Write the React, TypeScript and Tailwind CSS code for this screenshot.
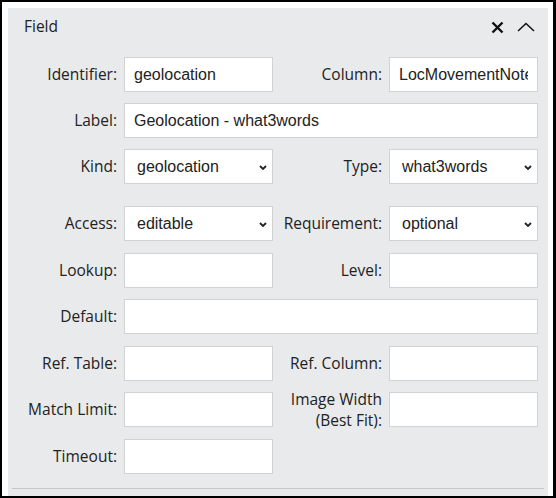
import React from "react";

const labelCls =
  "self-center text-right text-[15.5px] leading-[21px] text-[#222] font-['Open_Sans',sans-serif]";
const inputCls =
  "h-[35px] w-full border border-[#d2d2d2] bg-white px-[9px] text-[16px] text-[#222] font-['Liberation_Sans',Arial,sans-serif] outline-none";

function Label({ children }: { children: React.ReactNode }) {
  return <div className={labelCls}>{children}</div>;
}

function Input({ value = "", wide = false }: { value?: string; wide?: boolean }) {
  return (
    <input
      className={inputCls + (wide ? " col-span-3" : "")}
      defaultValue={value}
      readOnly
    />
  );
}

function Select({ value }: { value: string }) {
  return (
    <div className="relative h-[35px]">
      <select
        className="h-[35px] w-full appearance-none border border-[#d2d2d2] bg-white pl-[12px] pr-[20px] text-[16px] text-[#222] font-['Liberation_Sans',Arial,sans-serif] outline-none"
        defaultValue={value}
      >
        <option value={value}>{value}</option>
      </select>
      <svg
        className="pointer-events-none absolute right-[6px] top-[16px]"
        width="8"
        height="5"
        viewBox="0 0 8 5"
      >
        <polyline
          points="1,1 4,4 7,1"
          fill="none"
          stroke="#222"
          strokeWidth="1.8"
        />
      </svg>
    </div>
  );
}

export default function App() {
  return (
    <div className="box-border h-[498px] w-[556px] overflow-hidden border-b-2 border-l-2 border-r-[3px] border-t-2 border-black bg-white pl-[6px] pr-[5px] pt-[6px]">
      <div className="h-[600px] bg-[#e9eaeb]">
        <div className="flex h-[38px] items-center justify-between pl-[16px] pr-[13px]">
          <span className="text-[15.5px] text-[#222] font-['Open_Sans',sans-serif]">
            Field
          </span>
          <div className="flex items-center gap-[13px]">
            <svg width="13" height="13" viewBox="0 0 13 13">
              <path
                d="M1.5 1.5 L11.5 11.5 M11.5 1.5 L1.5 11.5"
                stroke="#111"
                strokeWidth="2.4"
                fill="none"
              />
            </svg>
            <svg width="18" height="10" viewBox="0 0 18 10">
              <polyline
                points="1,9 9,1.5 17,9"
                fill="none"
                stroke="#111"
                strokeWidth="1.5"
              />
            </svg>
          </div>
        </div>

        <div className="pl-[9px] pt-[11px]">
          <div className="grid auto-rows-[35px] grid-cols-[100px_149px_102px_149px] gap-x-[7px] gap-y-[11px]">
            <Label>Identifier:</Label>
            <Input value="geolocation" />
            <Label>Column:</Label>
            <Input value="LocMovementNote" />

            <Label>Label:</Label>
            <Input value="Geolocation - what3words" wide />

            <Label>Kind:</Label>
            <Select value="geolocation" />
            <Label>Type:</Label>
            <Select value="what3words" />
          </div>

          <div className="mt-[22px] grid auto-rows-[35px] grid-cols-[100px_149px_102px_149px] gap-x-[7px] gap-y-[11.6px]">
            <Label>Access:</Label>
            <Select value="editable" />
            <Label>Requirement:</Label>
            <Select value="optional" />

            <Label>Lookup:</Label>
            <Input />
            <Label>Level:</Label>
            <Input />

            <Label>Default:</Label>
            <Input wide />

            <Label>Ref. Table:</Label>
            <Input />
            <Label>Ref. Column:</Label>
            <Input />

            <Label>Match Limit:</Label>
            <Input />
            <Label>
              Image Width
              <br />
              (Best Fit):
            </Label>
            <Input />

            <Label>Timeout:</Label>
            <Input />
            <div />
            <div />
          </div>
        </div>

        <div className="mx-[4px] mt-[14px] h-px bg-[#c6c6c6]" />
      </div>
    </div>
  );
}
